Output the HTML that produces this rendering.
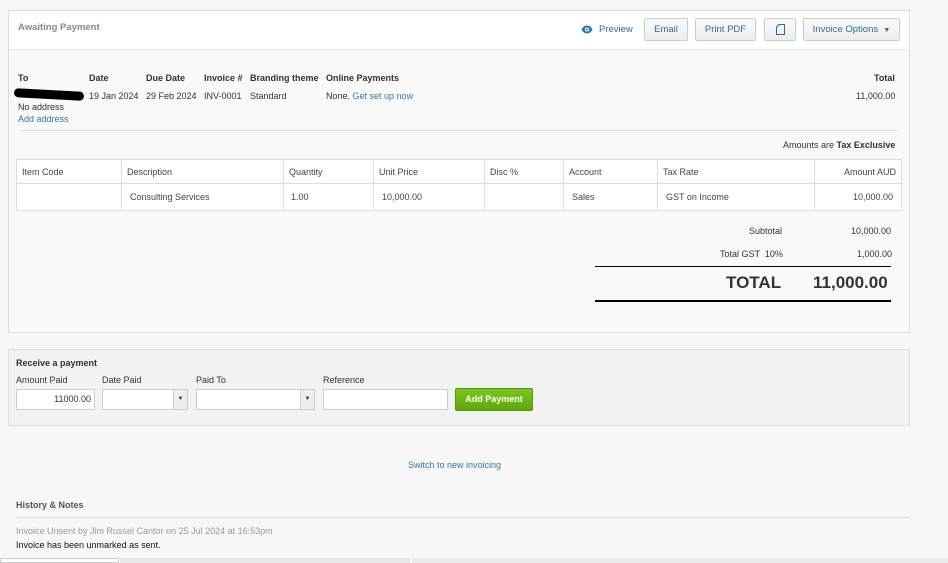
<!DOCTYPE html>
<html><head><meta charset="utf-8"><style>
*{margin:0;padding:0;box-sizing:border-box}
body{width:948px;height:563px;background:#f7f7f7;font-family:"Liberation Sans",sans-serif;font-size:9px;color:#333;position:relative;overflow:hidden}
.a{position:absolute;white-space:nowrap}
.b{font-weight:bold}
.lk{color:#2b7bb0}
.btn{position:absolute;top:18px;height:23px;border:1px solid #c8cdd1;border-radius:2px;background:linear-gradient(#fbfbfb,#eaeced);color:#2b6d9a;font-size:9.5px;text-align:center;line-height:21px}
table{position:absolute;left:16px;top:159px;width:886px;border-collapse:collapse;background:#fff}
td{border:1px solid #ddd;padding:0 5px;font-size:9px;color:#444}
.inp{position:absolute;top:389px;height:21px;background:#fff;border:1px solid #ccc}
</style></head><body>
<div class="a" style="left:8px;top:10px;width:902px;height:323px;border:1px solid #ddd;background:#f9f9f9"></div>
<div class="a" style="left:9px;top:11px;width:900px;height:39px;background:#fff;border-bottom:1px solid #e3e3e3"></div>
<div class="a b" style="left:18px;top:22px;color:#888;font-size:9.5px">Awaiting Payment</div>
<svg class="a" style="left:581px;top:25px" width="12" height="9" viewBox="0 0 12 9"><path d="M0.5 4.5C2 1.5 4 0.5 6 0.5S10 1.5 11.5 4.5C10 7.5 8 8.5 6 8.5S2 7.5 0.5 4.5Z" fill="#2b7bb0"/><circle cx="6" cy="4.5" r="2" fill="#fff"/><circle cx="6" cy="4.5" r="1" fill="#2b7bb0"/></svg>
<div class="a" style="left:599px;top:24px;color:#2b6d9a;font-size:9.5px">Preview</div>
<div class="btn" style="left:644px;width:44px">Email</div>
<div class="btn" style="left:695px;width:61px">Print PDF</div>
<div class="btn" style="left:764px;width:32px"><svg width="9" height="11" viewBox="0 0 9 11" style="margin-top:5px"><path d="M3 0.5H8.5V10.5H0.5V3Z" fill="none" stroke="#2b6d9a"/></svg></div>
<div class="btn" style="left:803px;width:97px">Invoice Options &nbsp;<span style="font-size:7px">▼</span></div>

<div class="a b" style="left:18px;top:73px">To</div>
<div class="a b" style="left:89px;top:73px">Date</div>
<div class="a b" style="left:146px;top:73px">Due Date</div>
<div class="a b" style="left:204px;top:73px">Invoice #</div>
<div class="a b" style="left:250px;top:73px">Branding theme</div>
<div class="a b" style="left:326px;top:73px">Online Payments</div>
<div class="a b" style="left:874px;top:73px">Total</div>
<div class="a" style="left:14px;top:90px;width:70px;height:9px;background:#000;border-radius:5px;transform:rotate(3deg)"></div>
<div class="a" style="left:89px;top:91px">19 Jan 2024</div>
<div class="a" style="left:146px;top:91px">29 Feb 2024</div>
<div class="a" style="left:204px;top:91px">INV-0001</div>
<div class="a" style="left:250px;top:91px">Standard</div>
<div class="a" style="left:326px;top:91px">None. <span class="lk">Get set up now</span></div>
<div class="a" style="left:856px;top:91px">11,000.00</div>
<div class="a" style="left:18px;top:102px">No address</div>
<div class="a lk" style="left:18px;top:114px">Add address</div>
<div class="a" style="left:20px;top:130px;width:877px;height:1px;background:#ddd"></div>
<div class="a" style="left:783px;top:140px">Amounts are <b>Tax Exclusive</b></div>

<table>
<tr style="height:24px"><td style="width:105px">Item Code</td><td style="width:162px">Description</td><td style="width:90px">Quantity</td><td style="width:111px">Unit Price</td><td style="width:79px">Disc %</td><td style="width:94px">Account</td><td style="width:157px">Tax Rate</td><td style="text-align:right">Amount AUD</td></tr>
<tr style="height:27px"><td></td><td style="padding-left:8px">Consulting Services</td><td style="padding-left:7px">1.00</td><td style="padding-left:8px">10,000.00</td><td></td><td style="padding-left:8px">Sales</td><td style="padding-left:8px">GST on Income</td><td style="text-align:right;padding-right:8px">10,000.00</td></tr>
</table>

<div class="a" style="left:749px;top:226px">Subtotal</div>
<div class="a" style="left:851px;top:226px">10,000.00</div>
<div class="a" style="left:720px;top:249px">Total GST &nbsp;10%</div>
<div class="a" style="left:857px;top:249px">1,000.00</div>
<div class="a" style="left:595px;top:266px;width:296px;height:1px;background:#000"></div>
<div class="a b" style="left:726px;top:273px;font-size:17px;color:#333">TOTAL</div>
<div class="a b" style="left:813px;top:273px;font-size:17px;color:#333">11,000.00</div>
<div class="a" style="left:595px;top:300px;width:296px;height:2px;background:#000"></div>

<div class="a" style="left:8px;top:349px;width:902px;height:77px;border:1px solid #ddd;background:#f2f2f2"></div>
<div class="a b" style="left:16px;top:358px">Receive a payment</div>
<div class="a" style="left:16px;top:375px">Amount Paid</div>
<div class="a" style="left:102px;top:375px">Date Paid</div>
<div class="a" style="left:196px;top:375px">Paid To</div>
<div class="a" style="left:323px;top:375px">Reference</div>
<div class="inp" style="left:16px;width:79px;text-align:right;padding-right:3px;line-height:19px">11000.00</div>
<div class="inp" style="left:102px;width:86px"><div class="a" style="right:0;top:0;width:14px;height:19px;background:#eee;border-left:1px solid #ccc;text-align:center;line-height:19px;font-size:6px">▼</div></div>
<div class="inp" style="left:196px;width:119px"><div class="a" style="right:0;top:0;width:14px;height:19px;background:#eee;border-left:1px solid #ccc;text-align:center;line-height:19px;font-size:6px">▼</div></div>
<div class="inp" style="left:323px;width:125px"></div>
<div class="a b" style="left:455px;top:388px;width:78px;height:23px;background:linear-gradient(#7cc520,#5ea90b);border:1px solid #529a08;border-radius:2px;color:#fff;text-align:center;line-height:21px">Add Payment</div>

<div class="a lk" style="left:408px;top:460px">Switch to new invoicing</div>
<div class="a b" style="left:16px;top:500px;color:#555">History &amp; Notes</div>
<div class="a" style="left:16px;top:517px;width:894px;height:1px;background:#ddd"></div>
<div class="a" style="left:16px;top:526px;color:#999">Invoice Unsent by Jim Russel Cantor on 25 Jul 2024 at 16:53pm</div>
<div class="a" style="left:16px;top:540px;color:#111">Invoice has been unmarked as sent.</div>
<div class="a" style="left:0;top:558px;width:119px;height:5px;background:#fff;border:1px solid #ccc"></div>
<div class="a" style="left:120px;top:558px;width:290px;height:5px;background:#e8e8e8"></div>
<div class="a" style="left:412px;top:558px;width:536px;height:5px;background:#ebebeb"></div>
</body></html>
